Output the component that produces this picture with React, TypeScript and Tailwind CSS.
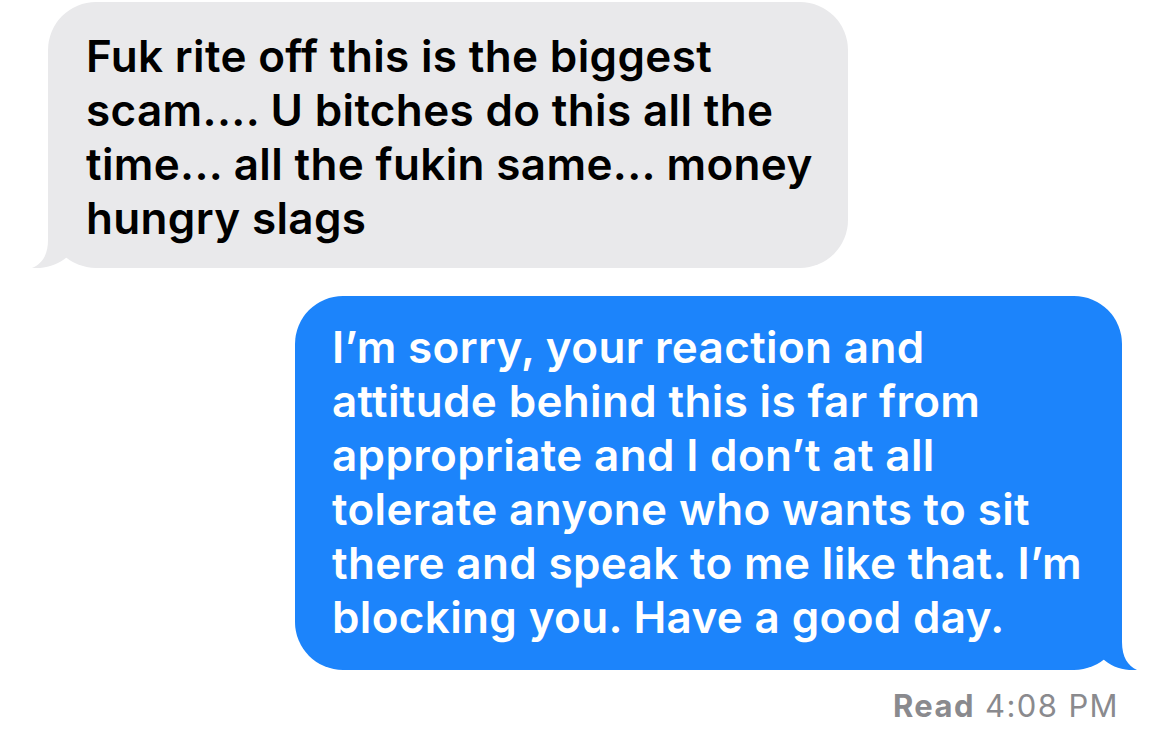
import React from "react";

const grayLines = [
  "Fuk rite off this is the biggest",
  "scam.... U bitches do this all the",
  "time... all the fukin same... money",
  "hungry slags",
];

const blueLines = [
  "I\u2019m sorry, your reaction and",
  "attitude behind this is far from",
  "appropriate and I don\u2019t at all",
  "tolerate anyone who wants to sit",
  "there and speak to me like that. I\u2019m",
  "blocking you. Have a good day.",
];

export default function App() {
  return (
    <div
      className="w-[1170px] h-[739px] bg-white overflow-hidden flex flex-col"
      style={{ fontFamily: "Inter, 'Liberation Sans', sans-serif" }}
    >
      <div className="relative ml-[48px] mt-[2px] w-[800px] h-[266px] bg-[#e9e9eb] rounded-[48px] pl-[38px] pt-[27px] text-[44px] leading-[54px] font-semibold text-black tracking-[0.35px]">
        <svg
          className="absolute left-[-16px] bottom-0"
          width="40"
          height="50"
          viewBox="0 0 40 50"
        >
          <path
            d="M16,0 L16,22 C16,37 10,46 0,50 C13,51 26,47 35,39 L35,0 Z"
            fill="#e9e9eb"
          />
        </svg>
        <div className="relative">
          {grayLines.map((l, i) => (
            <div key={i} className="whitespace-nowrap">
              {l}
            </div>
          ))}
        </div>
      </div>

      <div className="relative self-start ml-[295px] mt-[28px] w-[827px] h-[374px] bg-[#1c84fb] rounded-[48px] pl-[37px] pt-[24px] text-[44px] leading-[54px] font-semibold text-white tracking-[0.35px]">
        <svg
          className="absolute right-[-15px] bottom-0"
          width="40"
          height="50"
          viewBox="0 0 40 50"
        >
          <path
            d="M25,0 L25,22 C25,37 31,46 40,50 C27,51 14,47 5,38 L5,0 Z"
            fill="#1c84fb"
          />
        </svg>
        <div className="relative">
          {blueLines.map((l, i) => (
            <div key={i} className="whitespace-nowrap">
              {l}
            </div>
          ))}
        </div>
      </div>

      <div className="self-end mr-[51px] mt-[18px] text-[31px] leading-[36px] text-[#8a8a8e] whitespace-nowrap tracking-[1.4px]">
        <span className="font-bold">Read</span> 4:08 PM
      </div>
    </div>
  );
}
